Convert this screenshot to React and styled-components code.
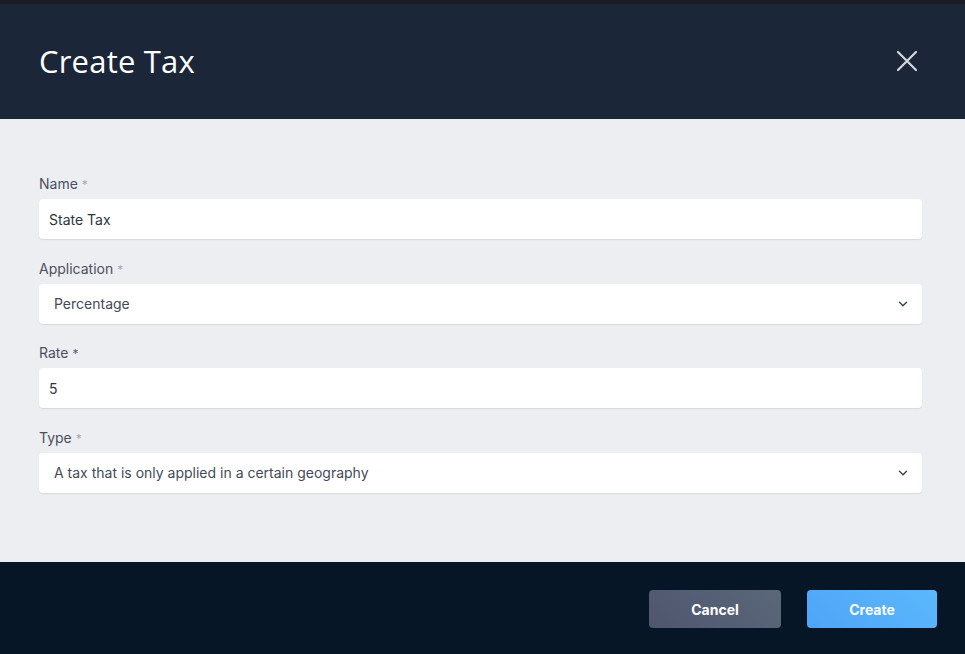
import React from "react";
import styled, { createGlobalStyle } from "styled-components";

const GlobalStyle = createGlobalStyle`
    * { box-sizing: border-box; }
    body {
        margin: 0;
        background: #1a1e24;
        font-family: "Inter", "Noto Sans", sans-serif;
    }
`;

const Modal = styled.div`
    margin-top: 4px;
    width: 965px;
    height: 650px;
    display: flex;
    flex-direction: column;
`;

const Header = styled.div`
    height: 115px;
    background: #1b2638;
    display: flex;
    align-items: center;
    justify-content: space-between;
    padding: 0 46px 0 39px;
`;

const Title = styled.h1`
    margin: 0 0 2px;
    font-family: "Open Sans", "Noto Sans", sans-serif;
    font-weight: 400;
    font-size: 31px;
    color: #ffffff;
    letter-spacing: 0.2px;
`;

const CloseButton = styled.button`
    background: none;
    border: none;
    padding: 0;
    width: 24px;
    height: 24px;
    display: flex;
    align-items: center;
    justify-content: center;
    cursor: pointer;
    margin-bottom: 2px;
`;

const Body = styled.div`
    flex: 1;
    background: #edeef2;
    padding: 55px 43px 0 39px;
    display: flex;
    flex-direction: column;
    gap: 19.5px;
`;

const Field = styled.div`
    display: flex;
    flex-direction: column;
    gap: 5px;
`;

const Label = styled.label`
    display: block;
    height: 20px;
    font-size: 14px;
    line-height: 20px;
    color: #4b5060;
`;

const Star = styled.span`
    color: ${(p) => (p.dark ? "#5a6070" : "#a6abb6")};
    margin-left: 4px;
    font-size: 12px;
    line-height: 1;
`;

const Box = styled.div`
    height: 40px;
    background: #ffffff;
    border-radius: 4px;
    box-shadow: 0 1px 1px rgba(0, 0, 0, 0.09);
    display: flex;
    align-items: center;
    justify-content: space-between;
    padding: 0 12px 0 ${(p) => (p.select ? "15px" : "10px")};
    font-size: 14px;
    color: ${(p) => (p.select ? "#454a57" : "#30343d")};
`;

const Footer = styled.div`
    height: 92px;
    background: #071626;
    display: flex;
    align-items: center;
    justify-content: flex-end;
    gap: 26px;
    padding: 2px 28px 0 0;
`;

const Button = styled.button`
    height: 38px;
    width: ${(p) => p.w}px;
    border: none;
    border-radius: 4px;
    color: #ffffff;
    font-family: "Inter", "Noto Sans", sans-serif;
    font-weight: 700;
    font-size: 14px;
    background: ${(p) =>
        p.primary
            ? "linear-gradient(45deg, #4fa4f7, #5bb8fd)"
            : "linear-gradient(45deg, #4f566f, #5a6779)"};
    cursor: pointer;
`;

const Chevron = () => (
    <svg width="14" height="14" viewBox="0 0 24 24" fill="none" stroke="#3d4250" strokeWidth="2.4" strokeLinecap="round" strokeLinejoin="round">
        <path d="M6 9l6 6 6-6" />
    </svg>
);

const fields = [
    { label: "Name", value: "State Tax" },
    { label: "Application", value: "Percentage", select: true },
    { label: "Rate", value: "5", dark: true },
    { label: "Type", value: "A tax that is only applied in a certain geography", select: true },
];

export default function App() {
    return (
        <>
            <GlobalStyle />
            <Modal>
                <Header>
                    <Title>Create Tax</Title>
                    <CloseButton aria-label="Close">
                        <svg width="22" height="22" viewBox="0 0 22 22" stroke="#d4d7dc" strokeWidth="2.2" strokeLinecap="round">
                            <path d="M2 2l18 18M20 2L2 20" />
                        </svg>
                    </CloseButton>
                </Header>
                <Body>
                    {fields.map((f) => (
                        <Field key={f.label}>
                            <Label>
                                {f.label}
                                <Star dark={f.dark}>*</Star>
                            </Label>
                            <Box select={f.select}>
                                <span>{f.value}</span>
                                {f.select && <Chevron />}
                            </Box>
                        </Field>
                    ))}
                </Body>
                <Footer>
                    <Button w={132}>Cancel</Button>
                    <Button w={130} primary>Create</Button>
                </Footer>
            </Modal>
        </>
    );
}
